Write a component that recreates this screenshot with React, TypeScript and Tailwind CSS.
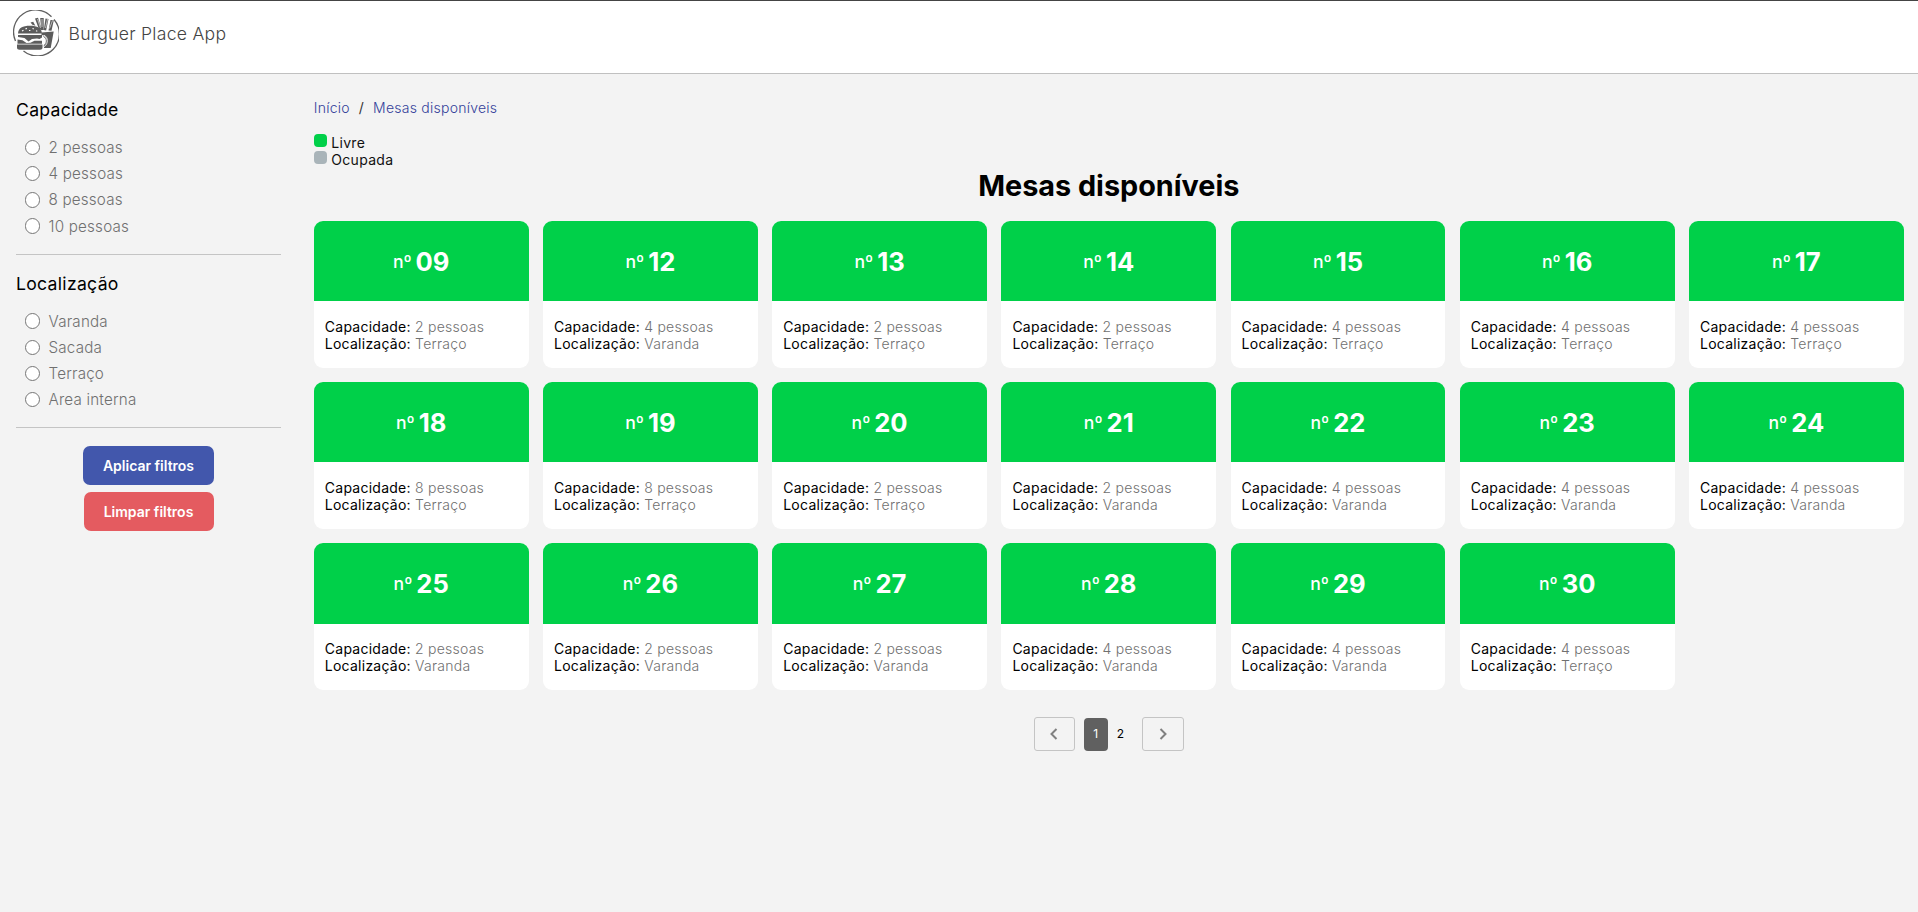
type Table = { num: string; seats: number; place: string };

const tables: Table[] = [
  { num: '09', seats: 2, place: 'Terraço' },
  { num: '12', seats: 4, place: 'Varanda' },
  { num: '13', seats: 2, place: 'Terraço' },
  { num: '14', seats: 2, place: 'Terraço' },
  { num: '15', seats: 4, place: 'Terraço' },
  { num: '16', seats: 4, place: 'Terraço' },
  { num: '17', seats: 4, place: 'Terraço' },
  { num: '18', seats: 8, place: 'Terraço' },
  { num: '19', seats: 8, place: 'Terraço' },
  { num: '20', seats: 2, place: 'Terraço' },
  { num: '21', seats: 2, place: 'Varanda' },
  { num: '22', seats: 4, place: 'Varanda' },
  { num: '23', seats: 4, place: 'Varanda' },
  { num: '24', seats: 4, place: 'Varanda' },
  { num: '25', seats: 2, place: 'Varanda' },
  { num: '26', seats: 2, place: 'Varanda' },
  { num: '27', seats: 2, place: 'Varanda' },
  { num: '28', seats: 4, place: 'Varanda' },
  { num: '29', seats: 4, place: 'Varanda' },
  { num: '30', seats: 4, place: 'Terraço' },
];

function Logo() {
  return (
    <svg className="h-[46px] w-[46px] shrink-0" viewBox="0 0 46 46" fill="none">
      <path d="M2.500 31A22 22 0 0 1 38.500 6.800M41 9.500A22 22 0 0 1 10.500 41" stroke="#606060" strokeWidth="1.300" />
      <g fill="#5c5c5c">
        <path d="M5 23.500C5.300 18 9.500 15.800 17 15.800S28.300 18 29 23.500Z" />
        <path d="M5 25H29v2.500l-2.500 1.500-2.500-.5-5 .5-3.500 2.500-4-3.500-6.500-1Z" />
        <path d="M4.500 29.500l5 .8 4 2.700 4-.3 4-2H29v3.100H4.500ZM4 34.500h25.500v3c0 1.500-1 2.200-2.500 2.200H6.500C5 39.700 4 39 4 37.500Z" />
        <path d="M28.500 22.500l12.200-1-3 16.500h-6.800l.6-2.500c3.500-3 3.500-8-.5-10l-2.500-.5Z" />
        <path d="M22 8.500l3-.8 4 12.500-3-1ZM27.200 8h3.500v12h-2.300ZM32.500 8.500l3 .4-2.400 11.500-2.300-.3ZM37.500 10l3.300.3-2.300 10.500-3-.2ZM17.500 12.500l2.700-.8 2.200 4-3-1Z" />
      </g>
      <path d="M30.500 26.500c3.800 1.500 3.800 7 .2 9.300" stroke="#5c5c5c" strokeWidth="1" />
      <path d="M31 25.200c4.500 2 4.500 8.500.3 11.500" stroke="#fff" strokeWidth=".8" />
      <path d="M9 21l1.500-.7M12.500 18.800l1.400-.4M16 20.500h1.400M19.500 18.500l1.300.3M23 20.800l1.300.4" stroke="#fff" strokeWidth="1.200" />
      <path d="M24.500 9l3 9M29 9v8M34.500 9l-2 9M39.500 10.500l-3 8" stroke="#fff" strokeWidth=".6" />
    </svg>
  );
}

function FilterGroup({ title, name, options }: { title: string; name: string; options: string[] }) {
  return (
    <fieldset className="border-b border-[#c4c4c4] pb-[19px]">
      <legend className="mb-[18px] text-[17.600px] leading-[22px] tracking-[0.3px] text-black">{title}</legend>
      <div className="flex flex-col gap-[9.200px] pl-[8.600px]">
        {options.map((o) => (
          <label key={o} className="flex h-[17px] items-center gap-[8.400px] text-[15.200px] leading-[17px] font-light tracking-[0.2px] text-[#707070]">
            <input type="radio" name={name} className="h-[15.500px] w-[15.500px] shrink-0 appearance-none rounded-full border border-[#767676] bg-white" />
            {o}
          </label>
        ))}
      </div>
    </fieldset>
  );
}

function TableCard({ num, seats, place }: Table) {
  return (
    <article className="h-[146.700px] overflow-hidden rounded-[9px] bg-white">
      <div className="flex h-[80.400px] items-center justify-center bg-[#00d049] pt-px text-white">
        <h3 className="flex items-center gap-[4px] text-[25.600px] leading-[31px] font-bold">
          <span className="text-[17.600px] leading-[21px] font-medium">nº</span>{num}
        </h3>
      </div>
      <div className="px-[11px] pt-[16.400px] text-[14px] leading-[17px] font-light tracking-[0.25px] text-[#707070]">
        <p><span className="font-normal text-black">Capacidade:</span> {seats} pessoas</p>
        <p><span className="font-normal text-black">Localização:</span> {place}</p>
      </div>
    </article>
  );
}

export default function App() {
  return (
    <div className="flex h-[912px] flex-col overflow-hidden bg-[#f3f3f3] font-['Inter',sans-serif] text-black">
      <header className="flex h-[74px] shrink-0 items-start gap-[9.500px] border-t border-b border-t-[#444] border-b-[#c0c0c0] bg-white pt-[9px] pl-[13px]">
        <Logo />
        <span className="mt-[12px] text-[17.600px] leading-[24px] font-light tracking-[0.28px] text-[#444]">Burguer Place App</span>
      </header>
      <div className="flex">
        <aside className="flex w-[281px] shrink-0 flex-col pt-[25px] pl-[16px]">
          <FilterGroup title="Capacidade" name="seats" options={['2 pessoas', '4 pessoas', '8 pessoas', '10 pessoas']} />
          <div className="h-[18px]" />
          <FilterGroup title="Localização" name="place" options={['Varanda', 'Sacada', 'Terraço', 'Area interna']} />
          <div className="mt-[18px] flex flex-col items-center gap-[7px]">
            <button className="h-[39px] w-[131px] rounded-[7px] bg-[#4257ac] text-[14px] font-semibold text-white">Aplicar filtros</button>
            <button className="h-[39px] w-[130px] rounded-[7px] bg-[#e45b60] text-[14px] font-semibold text-white">Limpar filtros</button>
          </div>
        </aside>
        <main className="ml-[32.800px] flex w-[1590px] flex-col pt-[25px]">
          <nav className="flex gap-[9px] text-[14px] leading-[17px] font-light tracking-[0.24px] text-[#32409a]">
            <a>Início</a>
            <span className="font-normal text-[#333]">/</span>
            <a>Mesas disponíveis</a>
          </nav>
          <ul className="mt-[18px] text-[14px] leading-[17px] tracking-[0.3px] text-[#111]">
            <li className="flex gap-[4.500px]"><i className="h-[13px] w-[13px] rounded-[4px] bg-[#00d049]" /><span>Livre</span></li>
            <li className="flex gap-[4.500px]"><i className="h-[13px] w-[13px] rounded-[4px] bg-[#a9b4b9]" /><span>Ocupada</span></li>
          </ul>
          <h1 className="text-center text-[28.800px] leading-[35px] font-bold">Mesas disponíveis</h1>
          <section className="mt-[18px] grid grid-cols-7 gap-[14.400px]">
            {tables.map((t) => <TableCard key={t.num} {...t} />)}
          </section>
          <nav className="mt-[27px] flex items-center justify-center text-[12px]">
            <button className="flex h-[34px] w-[41px] items-center justify-center rounded-[3px] border border-[#c4c4c4]">
              <svg width="8" height="12" viewBox="0 0 8 12" fill="none" stroke="#808080" strokeWidth="2"><path d="M6.500 1L1.500 6l5 5" /></svg>
            </button>
            <button className="mt-px ml-[9px] h-[33px] w-[24px] rounded-[4px] bg-[#606060] text-white">1</button>
            <button className="mt-px h-[33px] w-[25px]">2</button>
            <button className="ml-[9px] flex h-[34px] w-[42px] items-center justify-center rounded-[3px] border border-[#c4c4c4]">
              <svg width="8" height="12" viewBox="0 0 8 12" fill="none" stroke="#808080" strokeWidth="2"><path d="M1.500 1l5 5-5 5" /></svg>
            </button>
          </nav>
        </main>
      </div>
    </div>
  );
}
